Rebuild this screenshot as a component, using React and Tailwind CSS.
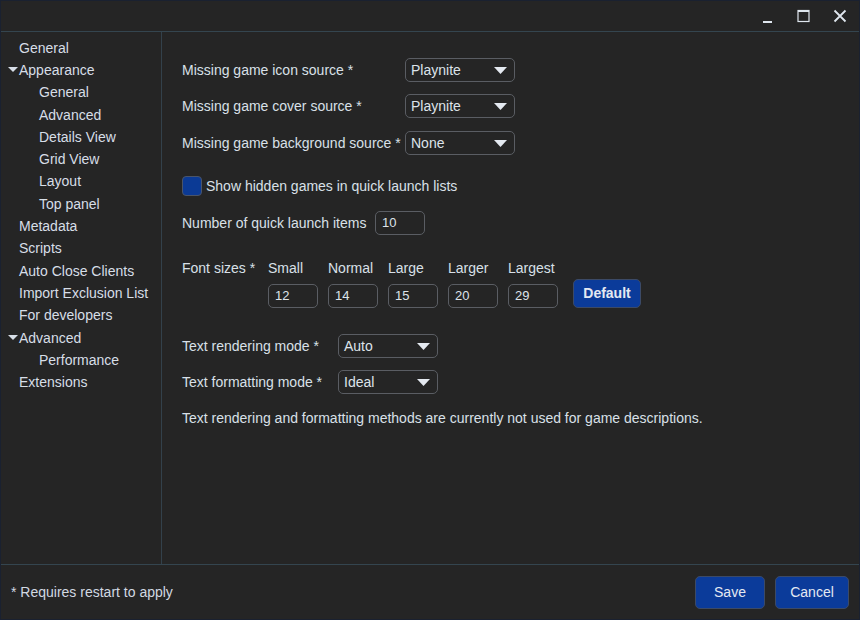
import React from "react";

const font = { fontFamily: '"Liberation Sans", Arial, sans-serif' };

function Arrow() {
  return (
    <svg width="13" height="7" viewBox="0 0 13 7" className="shrink-0">
      <path d="M0 0 L13 0 L6.5 7 Z" fill="#e4e9f0" />
    </svg>
  );
}

function Select({ value, w }) {
  return (
    <div
      className={`flex items-center justify-between h-[24px] ${w} rounded-[5px] border border-[#5a5d63] pl-[5px] pr-[7px] text-[14px] text-[#dde3ea]`}
    >
      <span>{value}</span>
      <Arrow />
    </div>
  );
}

function Input({ value }) {
  return (
    <div className="flex items-center h-[24px] w-[50px] rounded-[5px] border border-[#5a5d63] pl-[6px] text-[13px] text-[#dde3ea]">
      {value}
    </div>
  );
}

function NavItem({ label, level = 0, arrow }) {
  return (
    <div
      className={`flex items-center h-[22.3px] text-[14px] text-[#d7dee7] ${
        level === 1 ? "pl-[38px]" : arrow ? "pl-[7px]" : "pl-[18px]"
      }`}
    >
      {arrow && (
        <svg width="10" height="6" viewBox="0 0 10 6" className="mr-[1px]">
          <path d="M0 0 L10 0 L5 5 Z" fill="#d7dee7" />
        </svg>
      )}
      {label}
    </div>
  );
}

export default function App() {
  return (
    <div
      style={font}
      className="w-[860px] h-[620px] flex flex-col bg-[#252525] border border-[#1a2130] text-[#d9e0e8] overflow-hidden"
    >
      {/* Title bar */}
      <div className="h-[31px] flex items-center justify-end pr-[12px] border-b border-[#34454f] shrink-0">
        <div className="flex items-center gap-[22px]">
          <svg width="14" height="14" viewBox="0 0 14 14">
            <rect x="2" y="12" width="9" height="2" fill="#dfe6ee" />
          </svg>
          <svg width="14" height="14" viewBox="0 0 14 14">
            <rect x="1" y="1.5" width="11" height="11" fill="none" stroke="#dfe6ee" strokeWidth="1.2" />
            <rect x="1" y="1" width="11" height="2" fill="#dfe6ee" />
          </svg>
          <svg width="14" height="14" viewBox="0 0 14 14">
            <path d="M1.5 1.5 L12.5 12.5 M12.5 1.5 L1.5 12.5" stroke="#dfe6ee" strokeWidth="1.8" />
          </svg>
        </div>
      </div>

      {/* Main */}
      <div className="flex flex-1 min-h-0 border-b border-[#34454f]">
        <div className="w-[161px] shrink-0 border-r border-[#33414b] pt-[5px]">
          <NavItem label="General" />
          <NavItem label="Appearance" arrow />
          <NavItem label="General" level={1} />
          <NavItem label="Advanced" level={1} />
          <NavItem label="Details View" level={1} />
          <NavItem label="Grid View" level={1} />
          <NavItem label="Layout" level={1} />
          <NavItem label="Top panel" level={1} />
          <NavItem label="Metadata" />
          <NavItem label="Scripts" />
          <NavItem label="Auto Close Clients" />
          <NavItem label="Import Exclusion List" />
          <NavItem label="For developers" />
          <NavItem label="Advanced" arrow />
          <NavItem label="Performance" level={1} />
          <NavItem label="Extensions" />
        </div>

        <div className="flex-1 pl-[20px] pt-[26px] text-[14px] text-[#d9e0e8]">
          <div className="flex items-center h-[24px]">
            <div className="w-[223px]">Missing game icon source *</div>
            <Select value="Playnite" w="w-[110px]" />
          </div>
          <div className="flex items-center h-[24px] mt-[12px]">
            <div className="w-[223px]">Missing game cover source *</div>
            <Select value="Playnite" w="w-[110px]" />
          </div>
          <div className="flex items-center h-[24px] mt-[13px]">
            <div className="w-[223px] whitespace-nowrap">Missing game background source *</div>
            <Select value="None" w="w-[110px]" />
          </div>

          <div className="flex items-center h-[20px] mt-[21px]">
            <div className="w-[20px] h-[20px] rounded-[4px] bg-[#0b3a95] border border-[#4a5468]" />
            <span className="ml-[4px]">Show hidden games in quick launch lists</span>
          </div>

          <div className="flex items-center h-[24px] mt-[15px]">
            <div className="w-[193px] whitespace-nowrap">Number of quick launch items</div>
            <Input value="10" />
          </div>

          <div className="flex mt-[22px]">
            <div className="w-[86px] h-[22px] flex items-center">Font sizes *</div>
            {[
              ["Small", "12"],
              ["Normal", "14"],
              ["Large", "15"],
              ["Larger", "20"],
              ["Largest", "29"],
            ].map(([l, v]) => (
              <div key={l} className="w-[60px] flex flex-col">
                <div className="h-[22px] flex items-center">{l}</div>
                <div className="mt-[5px]">
                  <Input value={v} />
                </div>
              </div>
            ))}
            <div className="flex items-end ml-[5px]">
              <button className="h-[29px] w-[68px] rounded-[5px] bg-[#0b3b9a] border border-[#3c4a66] text-[14px] text-[#e4e9f2] font-bold">
                Default
              </button>
            </div>
          </div>

          <div className="flex items-center h-[24px] mt-[26px]">
            <div className="w-[156px]">Text rendering mode *</div>
            <Select value="Auto" w="w-[100px]" />
          </div>
          <div className="flex items-center h-[24px] mt-[12px]">
            <div className="w-[156px]">Text formatting mode *</div>
            <Select value="Ideal" w="w-[100px]" />
          </div>
          <div className="mt-[13px] h-[22px] flex items-center">
            Text rendering and formatting methods are currently not used for game descriptions.
          </div>
        </div>
      </div>

      {/* Footer */}
      <div className="h-[54px] shrink-0 flex items-center justify-between pl-[10px] pr-[10px]">
        <span className="text-[14px] text-[#d2d9e2]">* Requires restart to apply</span>
        <div className="flex gap-[10px]">
          <button className="h-[33px] w-[70px] rounded-[5px] bg-[#0b3b9a] border border-[#3c4a66] text-[14px] text-[#e4e9f2]">
            Save
          </button>
          <button className="h-[33px] w-[74px] rounded-[5px] bg-[#0b3b9a] border border-[#3c4a66] text-[14px] text-[#e4e9f2]">
            Cancel
          </button>
        </div>
      </div>
    </div>
  );
}
